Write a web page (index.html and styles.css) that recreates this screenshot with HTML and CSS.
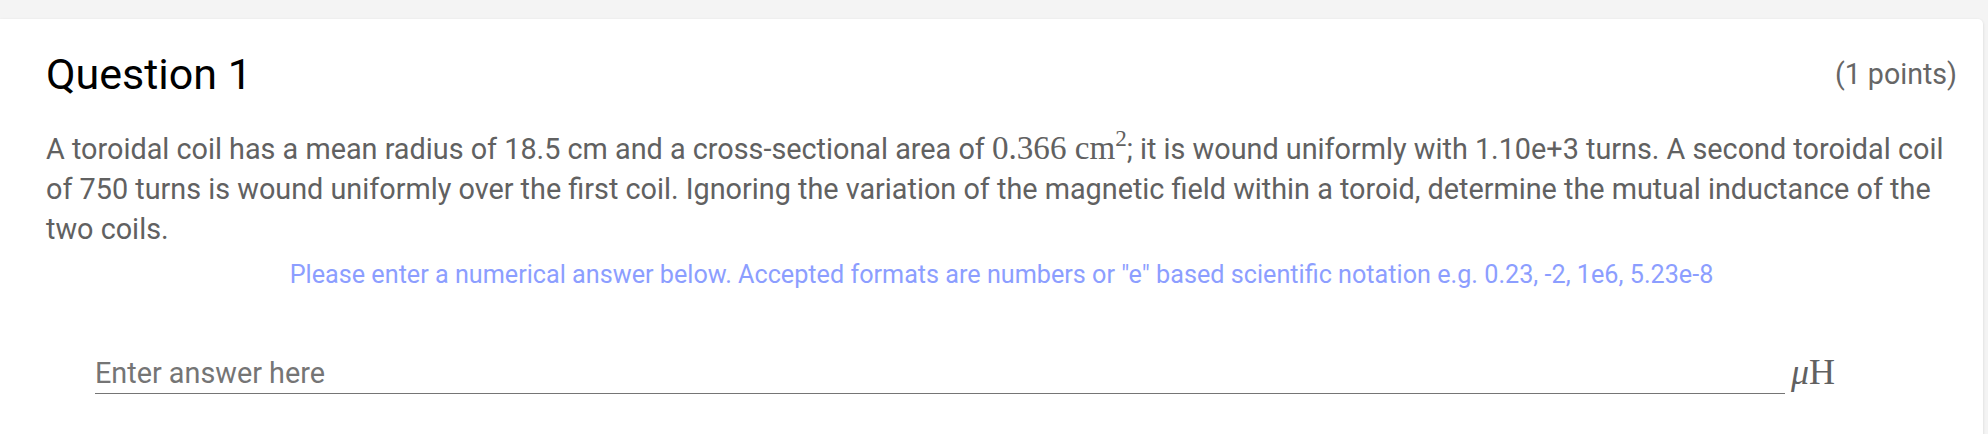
FILE: index.html
```html
<!DOCTYPE html>
<html lang="en">
<head>
<meta charset="utf-8">
<title>Question 1</title>
<link rel="stylesheet" href="styles.css">
</head>
<body>
<div class="page">
  <section class="card">
    <header class="q-header">
      <h1 class="q-title">Question 1</h1>
      <span class="q-points">(1 points)</span>
    </header>
    <p class="q-text">A toroidal coil has a mean radius of 18.5 cm and a cross-sectional area of <span class="math">0.366 cm<sup class="math-sup">2</sup></span>; it is wound uniformly with 1.10e+3 turns. A second toroidal coil of 750 turns is wound uniformly over the first coil. Ignoring the variation of the magnetic field within a toroid, determine the mutual inductance of the two coils.</p>
    <p class="q-hint">Please enter a numerical answer below. Accepted formats are numbers or "e" based scientific notation e.g. 0.23, -2, 1e6, 5.23e-8</p>
    <div class="answer-row">
      <input class="answer-input" type="text" placeholder="Enter answer here">
      <span class="unit"><span class="unit-mu">μ</span>H</span>
    </div>
  </section>
</div>
</body>
</html>
```
FILE: styles.css
```css
html, body {
  margin: 0;
  padding: 0;
}
body {
  background: #f4f4f4;
  font-family: Roboto, "Noto Sans", "Liberation Sans", sans-serif;
  overflow: hidden;
}
.page {
  padding: 19px 5px 0 0;
}
.card {
  background: #ffffff;
  border-radius: 0 5px 0 0;
  box-shadow: 0 1px 3px rgba(0, 0, 0, 0.14);
  padding: 28px 26px 40px 46px;
  min-height: 420px;
}
.q-header {
  display: flex;
  justify-content: space-between;
  align-items: center;
}
.q-title {
  margin: 0;
  font-size: 43px;
  font-weight: 400;
  line-height: 54px;
  color: #000000;
}
.q-points {
  font-size: 28.6px;
  color: #666666;
  line-height: 32px;
}
.q-text {
  margin: 28px 0 0 0;
  font-size: 28.8px;
  line-height: 40px;
  color: #616161;
}
.math {
  font-family: "Liberation Serif", "DejaVu Serif", serif;
  font-size: 1.15em;
  line-height: 0;
}
.math-sup {
  font-size: 0.7em;
  line-height: 0;
  vertical-align: 0.55em;
}
.q-hint {
  margin: 11px 0 0 0;
  text-align: center;
  font-size: 25.2px;
  line-height: 30px;
  color: #8c9eff;
}
.answer-row {
  display: flex;
  align-items: flex-end;
  margin-top: 64px;
  padding-left: 49px;
}
.answer-input {
  flex: 0 0 1690px;
  box-sizing: border-box;
  border: none;
  border-bottom: 1px solid #757575;
  outline: none;
  padding: 0 0 5px 0;
  margin: 0;
  font-family: Roboto, "Noto Sans", "Liberation Sans", sans-serif;
  font-size: 28.8px;
  line-height: 32px;
  height: 37px;
  color: #212121;
  background: transparent;
}
.answer-input::placeholder {
  color: #757575;
  opacity: 1;
}
.unit {
  margin-left: 6px;
  padding-bottom: 4px;
  font-family: "Liberation Serif", "DejaVu Serif", serif;
  font-size: 36px;
  line-height: 36px;
  color: #616161;
}
.unit-mu {
  font-style: italic;
}
```
